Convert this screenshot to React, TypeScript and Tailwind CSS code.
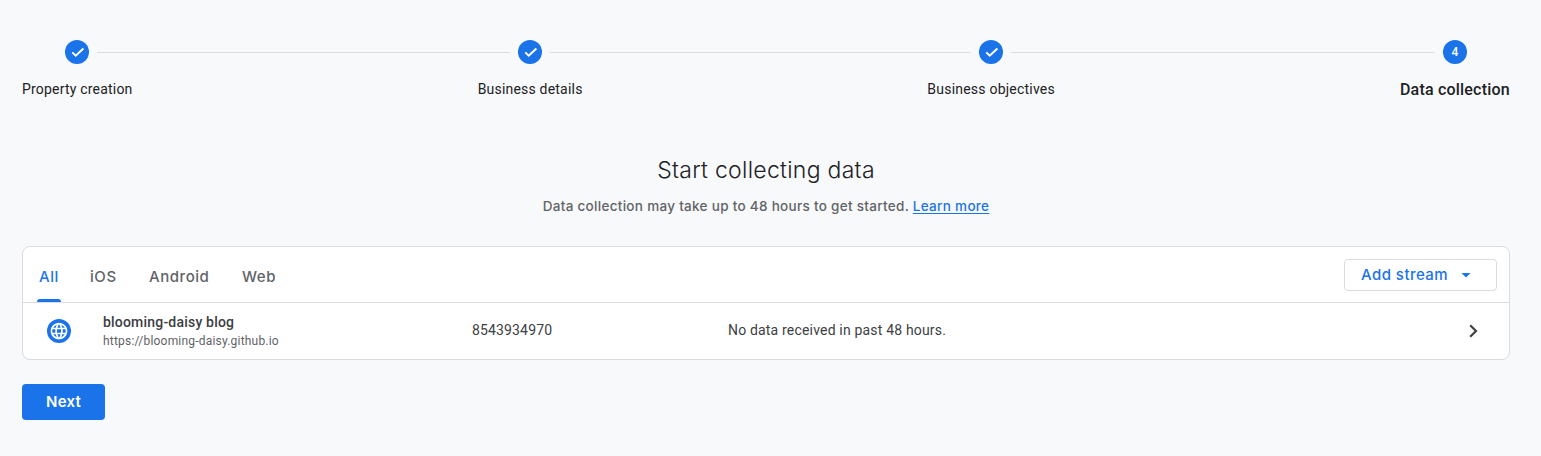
import { MdLanguage } from "react-icons/md";

const roboto = "font-[Roboto,sans-serif]";
const display = "font-[Inter,sans-serif]";

function Check() {
  return (
    <span className="flex size-6 shrink-0 items-center justify-center rounded-full bg-[#1a73e8]">
      <svg width="24" height="24" viewBox="0 0 24 24" fill="none" stroke="#fff" strokeWidth="2">
        <path d="M7.3 12.4l3.4 3.3 7.7-7.3" />
      </svg>
    </span>
  );
}

function Line({ className }: { className: string }) {
  return <span className={`mx-2 h-px bg-[#dadce0] ${className}`} />;
}

function Stepper() {
  return (
    <div className={roboto}>
      <div className="flex items-center px-[43px]">
        <Check />
        <Line className="w-[413px]" />
        <Check />
        <Line className="w-[421px]" />
        <Check />
        <Line className="w-[424px]" />
        <span className="flex size-6 shrink-0 items-center justify-center rounded-full bg-[#1a73e8] text-xs font-medium text-white">
          4
        </span>
      </div>
      <div className="mt-[15px] flex h-5 justify-between whitespace-nowrap text-sm leading-5 text-[#202124]">
        <span className="w-[110px] tracking-[0.2px]">Property creation</span>
        <span className="w-[104px] tracking-[0.2px]">Business details</span>
        <span className="w-[127px] tracking-[0.22px]">Business objectives</span>
        <span className="w-[110px] pt-px text-base font-medium leading-5 tracking-[0.2px]">Data collection</span>
      </div>
    </div>
  );
}

function Globe() {
  return (
    <span className="flex size-6 items-center justify-center rounded-full bg-[#1a73e8]">
      <MdLanguage className="size-5 text-white" />
    </span>
  );
}

export default function App() {
  return (
    <div className="h-[456px] w-[1541px] overflow-hidden bg-[#f8f9fa] pl-[22px] pr-[31px] pt-10">
      <Stepper />
      <div className={`mt-[55px] flex flex-col items-center whitespace-nowrap ${display}`}>
        <h1 className="h-8 text-[23px] font-light leading-8 tracking-[0.28px] text-[#202124]">Start collecting data</h1>
        <p className="mt-2.5 h-5 text-[13.5px] font-medium leading-5 tracking-[0.3px] text-[#5f6368]">
          Data collection may take up to 48 hours to get started.{" "}
          <a className="text-[#1a73e8] underline underline-offset-2">Learn more</a>
        </p>
      </div>
      <section className="mt-[30px] h-[114px] rounded-lg border border-[#dadce0] bg-white">
        <div className={`flex h-14 items-start justify-between border-b border-[#dadce0] pr-3 ${display}`}>
          <nav className="flex h-[55px] whitespace-nowrap pl-3.5 text-[15px] font-medium leading-6 tracking-[0.55px] text-[#5f6368]">
            <div className="flex w-6 flex-col items-center justify-between pt-[18px] text-[#1a73e8]">
              <span>All</span>
              <span className="h-[3px] w-6 rounded-t-[3px] bg-[#1a73e8]" />
            </div>
            <span className="ml-[29px] w-[59px] pt-[18px]">iOS</span>
            <span className="w-[93px] pt-[18px]">Android</span>
            <span className="pt-[18px]">Web</span>
          </nav>
          <button className="mt-3 flex h-8 w-[153px] items-center rounded border border-[#dadce0] pl-4 text-[15px] font-medium tracking-[0.45px] text-[#1a73e8]">
            <span className="w-[100px] text-left">Add stream</span>
            <svg width="10" height="5" viewBox="0 0 10 5" fill="#1a73e8">
              <path d="M0.5 0h9L5 4.5z" />
            </svg>
          </button>
        </div>
        <div className={`flex h-14 items-center pl-6 pr-[30px] text-sm text-[#3c4043] ${roboto}`}>
          <Globe />
          <div className="-mt-px ml-8 w-[369px]">
            <div className="h-[19px] font-medium leading-[19px] tracking-[0.2px]">blooming-daisy blog</div>
            <div className="h-4 pt-px text-xs leading-4 tracking-[0.2px] text-[#5f6368]">https://blooming-daisy.github.io</div>
          </div>
          <span className="-mt-0.5 w-64 tracking-[0.15px]">8543934970</span>
          <span className="-mt-0.5 flex-1 tracking-[0.18px]">No data received in past 48 hours.</span>
          <svg width="12" height="16" viewBox="0 0 12 16" fill="none" stroke="#3c4043" strokeWidth="2.2">
            <path d="M3.2 2.2L9 8l-5.8 5.8" />
          </svg>
        </div>
      </section>
      <button className={`mt-6 h-9 w-[83px] rounded bg-[#1a73e8] text-[15px] font-semibold tracking-[0.2px] text-white ${display}`}>
        Next
      </button>
    </div>
  );
}
